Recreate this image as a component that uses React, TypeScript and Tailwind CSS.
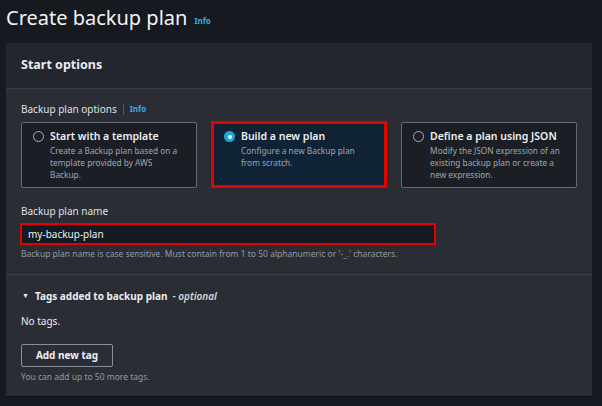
import React from 'react'

const options = [
  {
    title: 'Start with a template',
    lines: ['Create a Backup plan based on a', 'template provided by AWS', 'Backup.'],
    selected: false,
  },
  {
    title: 'Build a new plan',
    lines: ['Configure a new Backup plan', 'from scratch.'],
    selected: true,
  },
  {
    title: 'Define a plan using JSON',
    lines: ['Modify the JSON expression of an', 'existing backup plan or create a', 'new expression.'],
    selected: false,
  },
]

function Radio({ on }: { on: boolean }) {
  if (on)
    return (
      <span className="mt-[2px] flex h-[11px] w-[11px] shrink-0 items-center justify-center rounded-full bg-[#1ea7d9]">
        <span className="h-[4px] w-[4px] rounded-full bg-white" />
      </span>
    )
  return <span className="mt-[2px] h-[11px] w-[11px] shrink-0 rounded-full border border-[#aab1b9]" />
}

export default function App() {
  return (
    <div
      className="h-[406px] w-[602px] overflow-hidden bg-[#16191f] pl-[6px] pr-[10px] text-[#eaedf0]"
      style={{ fontFamily: '"Noto Sans", "Open Sans", sans-serif' }}
    >
      <div className="flex h-[43px] items-start pt-[3px]">
        <h1 className="text-[20px] leading-[30px] text-[#f2f3f3]">Create backup plan</h1>
        <span className="ml-[7px] mt-[12px] text-[8px] font-bold text-[#3aaee0]">Info</span>
      </div>

      <div className="bg-[#2a2d33] shadow-[0_1px_0_#0c0e12]">
        <div className="flex h-[46px] items-center border-b border-[#393d44] bg-[#22262d] px-[15px]">
          <h2 className="text-[12.5px] font-bold leading-none">Start options</h2>
        </div>

        <div className="px-[15px] pt-[13px]">
          <div className="flex items-center text-[10px] leading-[14px] text-[#dfe2e5]">
            <span>Backup plan options</span>
            <span className="mx-[6px] h-[11px] w-px bg-[#555a61]" />
            <span className="text-[8px] font-bold text-[#3aaee0]">Info</span>
          </div>

          <div className="mt-[6px] grid grid-cols-3 gap-[14px]">
            {options.map((o) => (
              <div
                key={o.title}
                className={
                  o.selected
                    ? '-mt-[1px] h-[67px] border-[3px] border-[#e60000] bg-[#0f2236] pl-[10px] pr-[4px] pt-[5px]'
                    : 'h-[66px] rounded-[2px] border border-[#666c74] bg-[#1b1f25] pl-[11px] pr-[5px] pt-[6px]'
                }
              >
                <div className="flex items-start gap-[6px]">
                  <Radio on={o.selected} />
                  <div>
                    <div className="text-[10.5px] font-semibold leading-[15px] text-[#eef0f2]">{o.title}</div>
                    <div className="mt-[1px] text-[8.3px] leading-[12px] text-[#9ea6ae]">
                      {o.lines.map((l) => (
                        <div key={l} className="whitespace-nowrap">{l}</div>
                      ))}
                    </div>
                  </div>
                </div>
              </div>
            ))}
          </div>

          <div className="mt-[16px] text-[10px] leading-[14px] text-[#dfe2e5]">Backup plan name</div>
          <div className="-ml-[1px] mt-[5px] flex h-[22px] w-[416px] items-center border-2 border-[#e60000] bg-[#141a22] px-[6px] text-[10px] text-[#eef0f2]">
            my-backup-plan
          </div>
          <div className="mt-[3px] text-[8.5px] leading-[12px] text-[#929aa3]">
            Backup plan name is case sensitive. Must contain from 1 to 50 alphanumeric or '-_.' characters.
          </div>
        </div>

        <div className="mt-[14px] border-t border-[#3b3f46] px-[15px] pb-[13px] pt-[14px]">
          <div className="flex items-center text-[10px] font-bold leading-[14px]">
            <span className="ml-[1px] mr-[6px] text-[7px]">▼</span>
            <span>Tags added to backup plan</span>
            <span className="ml-[5px] font-semibold italic text-[#d5d9dd]">- optional</span>
          </div>
          <div className="mt-[11px] text-[10px] leading-[14px]">No tags.</div>
          <button className="mt-[16px] flex h-[23px] w-[92px] items-center justify-center rounded-[2px] border border-[#8a9097] text-[10px] font-bold text-[#eef0f2]">
            Add new tag
          </button>
          <div className="mt-[4px] text-[8.5px] leading-[12px] text-[#929aa3]">You can add up to 50 more tags.</div>
        </div>
      </div>
    </div>
  )
}
